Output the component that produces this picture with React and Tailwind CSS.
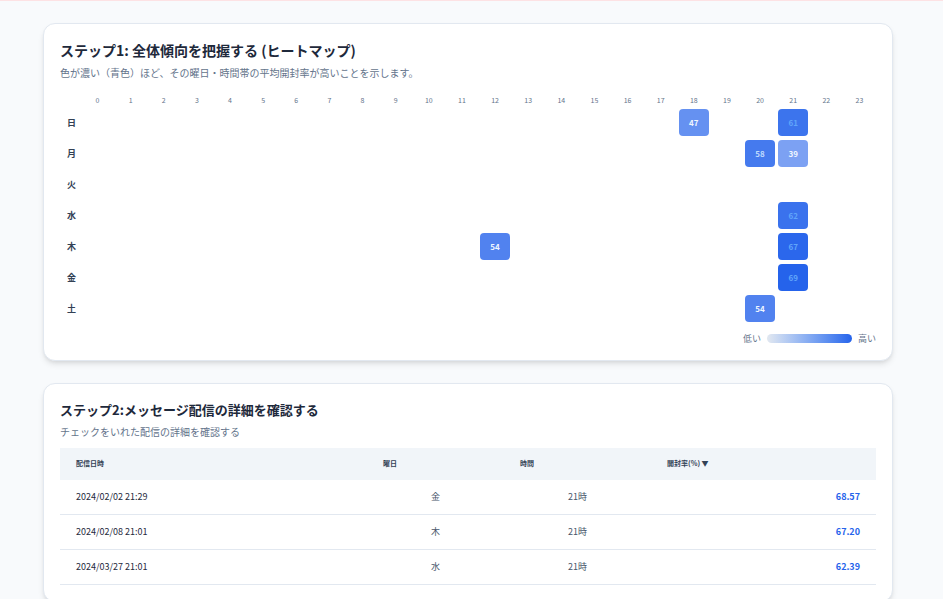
const F = { fontFamily: '"Noto Sans CJK JP","Noto Sans",sans-serif' };
const days = ["日","月","火","水","木","金","土"];
const data = { "0-18":47, "0-21":61, "1-20":58, "1-21":39, "3-21":62, "4-12":54, "4-21":67, "5-21":69, "6-20":54 };
function cellStyle(v){
  const t = (v-39)/(69-39);
  const a = 0.6 + 0.4*t;
  return { backgroundColor: `rgba(37,99,235,${a})`, color: t>0.7 ? "#60a5fa" : t>0.5 ? "#bfdbfe" : "#eff6ff" };
}
const rows = [
  ["2024/02/02 21:29","金","21時","68.57"],
  ["2024/02/08 21:01","木","21時","67.20"],
  ["2024/03/27 21:01","水","21時","62.39"],
];
export default function App(){
  return (
    <div style={F} className="h-[599px] overflow-hidden bg-[#f8fafc] border-t border-[#fde2e4] pl-[43px] pr-[50px] pt-[22px] text-[#334155]">
      <div className="bg-white rounded-xl border border-[#e2e8f0] shadow-md px-4 pt-4 pb-[14px]">
        <h2 className="text-[14px] font-bold text-[#1e293b] leading-5">ステップ1: 全体傾向を把握する (ヒートマップ)</h2>
        <p className="text-[10px] text-[#64748b] mt-[5px]">色が濃い（青色）ほど、その曜日・時間帯の平均開封率が高いことを示します。</p>
        <div className="mt-[13px] grid grid-cols-[21px_repeat(24,1fr)] items-center">
          <div className="h-[14px]"></div>
          {Array.from({length:24},(_,h)=>(<div key={h} className="text-center text-[7px] text-[#64748b] h-[14px] leading-[14px]">{h}</div>))}
          {days.map((d,r)=>[
            <div key={d} className="text-[9px] font-bold text-[#334155] text-center h-[31px] leading-[31px] pl-[2px]">{d}</div>,
            ...Array.from({length:24},(_,h)=>{
              const v = data[`${r}-${h}`];
              return <div key={d+h} className="h-[31px] flex items-center justify-center">
                {v!==undefined && <div style={cellStyle(v)} className="w-[30px] h-[27px] rounded-[4px] flex items-center justify-center text-[8px] font-bold">{v}</div>}
              </div>;
            })
          ])}
        </div>
        <div className="flex justify-end items-center gap-[6px] mt-[8px] text-[9px] text-[#64748b]">
          <span>低い</span>
          <div className="w-[85px] h-[9px] rounded-full bg-gradient-to-r from-[#e2e8f0] to-[#2563eb]"></div>
          <span>高い</span>
        </div>
      </div>
      <div className="mt-[22px] bg-white rounded-xl border border-[#e2e8f0] shadow-md px-4 pt-4 pb-4">
        <h2 className="text-[13px] font-bold text-[#1e293b] leading-5">ステップ2:メッセージ配信の詳細を確認する</h2>
        <p className="text-[10px] text-[#64748b] mt-[4px]">チェックをいれた配信の詳細を確認する</p>
        <div className="mt-[9px]">
          <div className="grid grid-cols-[307px_137px_147px_1fr] bg-[#f1f5f9] h-[32px] items-center text-[7px] font-bold text-[#334155]">
            <div className="px-4">配信日時</div><div className="px-4">曜日</div><div className="px-4">時間</div><div className="px-4">開封率(%) ▼</div>
          </div>
          {rows.map((r,i)=>(
            <div key={i} className="grid grid-cols-[307px_137px_147px_1fr] h-[35px] items-center border-b border-[#e2e8f0] text-[9px]">
              <div className="px-4 text-[#1e293b]">{r[0]}</div>
              <div className="text-center text-[#475569]">{r[1]}</div>
              <div className="text-center text-[#475569]">{r[2]}</div>
              <div className="px-4 text-right font-bold text-[#2563eb]">{r[3]}</div>
            </div>
          ))}
        </div>
      </div>
    </div>
  );
}
